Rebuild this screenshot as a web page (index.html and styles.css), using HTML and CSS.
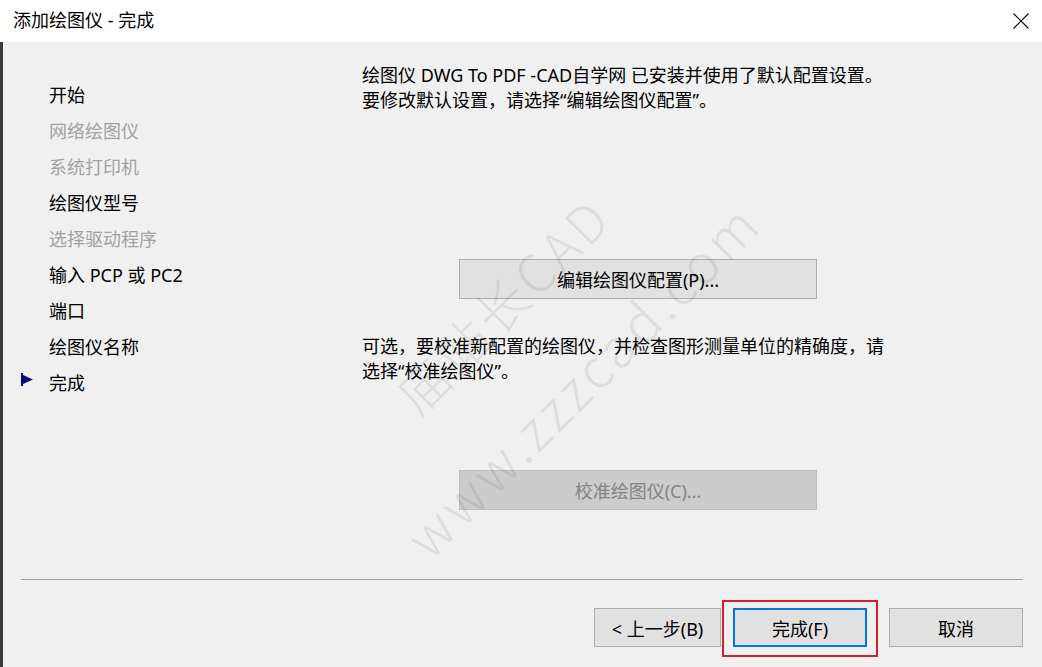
FILE: index.html
```html
<!DOCTYPE html>
<html lang="zh-CN">
<head>
<meta charset="utf-8">
<title>添加绘图仪 - 完成</title>
<link rel="stylesheet" href="styles.css">
</head>
<body>
<div class="window">
  <div class="titlebar">
    <span class="title">添加绘图仪 - 完成</span>
    <svg class="close" width="16" height="16" viewBox="0 0 16 16"><path d="M0.5 0.5 L15.5 15.5 M15.5 0.5 L0.5 15.5" stroke="#000" stroke-width="1.1" fill="none"/></svg>
  </div>
  <div class="content">
    <ul class="nav">
      <li class="step"><span class="marker"></span>开始</li>
      <li class="step off"><span class="marker"></span>网络绘图仪</li>
      <li class="step off"><span class="marker"></span>系统打印机</li>
      <li class="step"><span class="marker"></span>绘图仪型号</li>
      <li class="step off"><span class="marker"></span>选择驱动程序</li>
      <li class="step"><span class="marker"></span>输入 PCP 或 PC2</li>
      <li class="step"><span class="marker"></span>端口</li>
      <li class="step"><span class="marker"></span>绘图仪名称</li>
      <li class="step"><span class="marker"><svg width="12" height="13" viewBox="0 0 12 13"><path d="M0 0 H2 V2 L12 6.5 L2 11 V13 H0 Z" fill="#0a0a78"/></svg></span>完成</li>
    </ul>
    <div class="main">
      <p class="msg">绘图仪 DWG To PDF -CAD自学网 已安装并使用了默认配置设置。<br>要修改默认设置，请选择“编辑绘图仪配置”。</p>
      <button class="btn wide edit">编辑绘图仪配置(P)...</button>
      <p class="msg second">可选，要校准新配置的绘图仪，并检查图形测量单位的精确度，请<br>选择“校准绘图仪”。</p>
      <button class="btn wide disabled calib">校准绘图仪(C)...</button>
    </div>
  </div>
  <div class="footer">
    <div class="sep"></div>
    <div class="actions">
      <button class="btn back">&lt; 上一步(B)</button>
      <div class="finish-wrap"><button class="btn finish">完成(F)</button></div>
      <button class="btn cancel">取消</button>
    </div>
  </div>
  <div class="wm wm1">庙站长CAD</div>
  <div class="wm wm2">www.zzzcad.com</div>
</div>
</body>
</html>
```

FILE: styles.css
```css
* { box-sizing: border-box; }
html, body { margin: 0; padding: 0; }
body {
  width: 1042px;
  height: 667px;
  overflow: hidden;
  background: #f0f0f0;
  font-family: "Noto Sans", "Noto Sans CJK SC", sans-serif;
  color: #000;
  text-spacing-trim: space-all;
}
.window {
  position: relative;
  width: 1042px;
  height: 667px;
  display: flex;
  flex-direction: column;
  background: #f0f0f0;
  border-left: 3px solid #3a3a3a;
}
.titlebar {
  height: 42px;
  flex: 0 0 42px;
  background: #fff;
  display: flex;
  align-items: center;
  justify-content: space-between;
  padding: 0 13px 0 13px;
  margin-left: -3px;
}
.title {
  font-size: 18px;
  line-height: 24px;
  margin-top: -2px;
}
.close { display: block; margin-top: -1px; }
.content {
  flex: 1;
  display: flex;
}
.nav {
  list-style: none;
  margin: 0;
  padding: 34px 0 0 18px;
  width: 359px;
  flex: 0 0 359px;
}
.step {
  display: flex;
  align-items: center;
  height: 36px;
  font-size: 18px;
  color: #000;
}
.step.off { color: #a2a2a2; }
.marker {
  width: 28px;
  flex: 0 0 28px;
  display: flex;
  align-items: center;
  margin-top: -6px;
}
.main {
  flex: 1;
  padding-top: 21px;
}
.msg {
  margin: 0;
  font-size: 18px;
  line-height: 25px;
}
.btn {
  font-family: "Noto Sans", "Noto Sans CJK SC", sans-serif;
  font-size: 18px;
  background: #e1e1e1;
  border: 1px solid #adadad;
  color: #000;
  padding: 0;
  display: flex;
  align-items: center;
  justify-content: center;
}
.wide {
  width: 358px;
  height: 40px;
  margin-left: 97px;
}
.edit { margin-top: 146px; }
.second { margin-top: 35px; }
.calib { margin-top: 86px; }
.disabled {
  background: #cccccc;
  border-color: #bfbfbf;
  color: #838383;
}
.footer {
  flex: 0 0 88px;
  height: 88px;
}
.sep {
  height: 1px;
  background: #a0a0a0;
  margin: 0 19px 0 18px;
}
.actions {
  display: flex;
  justify-content: flex-end;
  padding-right: 19px;
  margin-top: 28px;
}
.back { width: 127px; height: 39px; margin-right: 12px; }
.finish-wrap { position: relative; margin-right: 22px; }
.finish {
  width: 134px;
  height: 39px;
  border: 2px solid #0078d7;
}
.finish-wrap::after {
  content: "";
  position: absolute;
  left: -11px;
  right: -11px;
  top: -8px;
  bottom: -10px;
  border: 2.5px solid #d3212c;
  pointer-events: none;
}
.cancel { width: 134px; height: 39px; }
.wm {
  position: absolute;
  pointer-events: none;
  white-space: nowrap;
  color: rgba(0, 0, 0, 0.08);
  font-family: "Noto Sans CJK SC", "Noto Sans", sans-serif;
  font-weight: 300;
  transform: translate(-50%, -50%) rotate(-45deg);
}
.wm1 {
  left: 498px;
  top: 304px;
  font-size: 52px;
  letter-spacing: 4px;
}
.wm2 {
  left: 578px;
  top: 378px;
  font-size: 54px;
  letter-spacing: 4px;
}
```
